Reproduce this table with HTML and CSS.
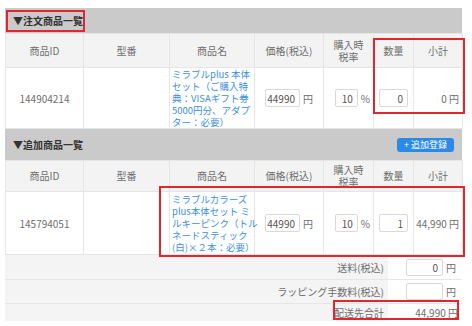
FILE: index.html
```html
<!DOCTYPE html>
<html lang="ja">
<head>
<meta charset="utf-8">
<link rel="stylesheet" href="styles.css">
</head>
<body>
<div class="page">
  <div class="tabstrip"><span class="tabtext">税込</span></div>

  <section class="sec">
    <div class="sec-head"><span class="sec-title">▼注文商品一覧</span></div>
    <table class="items">
      <colgroup>
        <col class="c-id"><col class="c-model"><col class="c-name"><col class="c-price"><col class="c-tax"><col class="c-qty"><col class="c-sub">
      </colgroup>
      <thead>
        <tr class="hrow hrow--a">
          <th>商品ID</th><th>型番</th><th>商品名</th><th>価格(税込)</th><th>購入時<br>税率</th><th>数量</th><th>小計</th>
        </tr>
      </thead>
      <tbody>
        <tr class="drow drow--a">
          <td class="t-id">144904214</td>
          <td></td>
          <td class="t-name"><a class="pname" href="#">ミラブルplus 本体<br>セット（ご購入特<br>典：VISAギフト券<br>5000円分、アダプ<br>ター：必要）</a></td>
          <td class="t-price"><input class="num num--price" value="44990"><span class="unit">円</span></td>
          <td class="t-tax"><input class="num num--tax" value="10"><span class="unit">%</span></td>
          <td class="t-qty"><input class="num num--qty" value="0"></td>
          <td class="t-sub">0 円</td>
        </tr>
      </tbody>
    </table>
  </section>

  <section class="sec">
    <div class="sec-head sec-head--tall"><span class="sec-title">▼追加商品一覧</span><button class="add-btn" type="button">+ 追加登録</button></div>
    <table class="items">
      <colgroup>
        <col class="c-id"><col class="c-model"><col class="c-name"><col class="c-price"><col class="c-tax"><col class="c-qty"><col class="c-sub">
      </colgroup>
      <thead>
        <tr class="hrow hrow--b">
          <th>商品ID</th><th>型番</th><th>商品名</th><th>価格(税込)</th><th>購入時<br>税率</th><th>数量</th><th>小計</th>
        </tr>
      </thead>
      <tbody>
        <tr class="drow drow--b">
          <td class="t-id">145794051</td>
          <td></td>
          <td class="t-name"><a class="pname" href="#">ミラブルカラーズ<br>plus本体セット ミ<br>ルキーピンク（トル<br>ネードスティック<br>(白)×２本：必要）</a></td>
          <td class="t-price"><input class="num num--price" value="44990"><span class="unit">円</span></td>
          <td class="t-tax"><input class="num num--tax" value="10"><span class="unit">%</span></td>
          <td class="t-qty"><input class="num num--qty" value="1"></td>
          <td class="t-sub">44,990 円</td>
        </tr>
      </tbody>
    </table>
    <div class="totals">
      <div class="tl tl--r1">送料(税込)</div>
      <div class="tv tv--r1"><input class="num num--fee" value="0"><span class="unit">円</span></div>
      <div class="tl tl--r2">ラッピング手数料(税込)</div>
      <div class="tv tv--r2"><input class="num num--fee" value=""><span class="unit">円</span></div>
      <div class="tl tl--r3">配送先合計</div>
      <div class="tv tv--r3">44,990 円</div>
    </div>
  </section>

  <div class="mark mark--1"></div>
  <div class="mark mark--2"></div>
  <div class="mark mark--3"></div>
  <div class="mark mark--4"></div>
</div>
</body>
</html>
```

FILE: styles.css
```css
* { box-sizing: border-box; }

html, body {
  margin: 0;
  padding: 0;
  background: #ffffff;
}

body {
  font-family: "Noto Sans CJK JP", "Noto Sans", sans-serif;
  font-size: 10px;
  color: #666666;
}

.page {
  position: relative;
  width: 472px;
  height: 326px;
  padding-left: 5px;
  overflow: hidden;
}

.tabstrip {
  height: 8px;
  width: 117px;
  overflow: hidden;
}

.tabtext {
  display: block;
  margin: -10px 0 0 78px;
  font-size: 9px;
  line-height: 12px;
  color: #bbbbbb;
}

.sec-head {
  width: 457px;
  height: 25px;
  background: #cacaca;
  display: flex;
  align-items: center;
  justify-content: space-between;
  padding: 0 8px;
}

.sec-head--tall {
  height: 31px;
}

.sec-title {
  font-weight: bold;
  font-size: 10px;
  color: #333333;
}

.add-btn {
  height: 14px;
  width: 57px;
  padding: 0;
  border: none;
  border-radius: 3px;
  background: #2b8ae6;
  color: #ffffff;
  font-family: "Noto Sans CJK JP", "Noto Sans", sans-serif;
  font-size: 9px;
  line-height: 14px;
}

.items {
  width: 457px;
  table-layout: fixed;
  border-collapse: collapse;
}

.c-id { width: 78px; }
.c-model { width: 86px; }
.c-name { width: 85px; }
.c-price { width: 69px; }
.c-tax { width: 50px; }
.c-qty { width: 40px; }
.c-sub { width: 49px; }

.items th,
.items td {
  border: 1px solid #e6e6e6;
  padding: 0;
  font-size: 10px;
  vertical-align: middle;
}

.items th {
  background: #f3f3f3;
  color: #6e6e6e;
  font-weight: normal;
  line-height: 12px;
  text-align: center;
}

.items td {
  background: #ffffff;
  color: #6e6e6e;
}

.hrow--a th { height: 34px; }
.hrow--b th { height: 31px; }
.drow--a td { height: 61px; }
.drow--b td { height: 63px; }

.t-id { text-align: center; }

.t-name {
  padding: 0 2px !important;
  white-space: nowrap;
}

.pname {
  display: block;
  color: #3d8fe0;
  text-decoration: none;
  font-size: 9.5px;
  line-height: 12px;
}

.t-price { text-align: center; white-space: nowrap; }
.t-tax { text-align: right; padding-right: 3px !important; white-space: nowrap; }
.t-qty { text-align: center; }
.t-sub { text-align: right; padding-right: 3px !important; white-space: nowrap; }

.num {
  display: inline-block;
  vertical-align: middle;
  height: 18px;
  border: 1px solid #d9d9d9;
  border-radius: 2px;
  background: #ffffff;
  padding: 0 4px 0 0;
  margin: 0;
  text-align: right;
  font-family: "Noto Sans CJK JP", "Noto Sans", sans-serif;
  font-size: 10px;
  color: #555555;
}

.num--price { width: 35px; }
.num--tax { width: 23px; }
.num--qty { width: 29px; }
.num--fee { width: 37px; height: 17px; }

.unit {
  display: inline-block;
  vertical-align: middle;
  margin-left: 3px;
  color: #6e6e6e;
}

.totals {
  width: 457px;
  display: grid;
  grid-template-columns: 1fr 74px;
  grid-template-rows: 25px 24px 17px;
}

.tl {
  background: #f4f4f4;
  padding-right: 4px;
  display: flex;
  align-items: center;
  justify-content: flex-end;
  color: #6e6e6e;
}

.tv {
  background: #ffffff;
  display: flex;
  align-items: center;
  justify-content: flex-end;
  padding-right: 6px;
  color: #6e6e6e;
}

.tl--r1, .tv--r1, .tl--r2, .tv--r2 {
  border-bottom: 1px solid #e6e6e6;
}

.tv--r3 { padding-right: 4px; }

.mark {
  position: absolute;
  border: 2px solid #e0262e;
  pointer-events: none;
}

.mark--1 { left: 6px; top: 10px; width: 79px; height: 22px; }
.mark--2 { left: 373px; top: 38px; width: 92px; height: 76px; }
.mark--3 { left: 159px; top: 186px; width: 306px; height: 71px; }
.mark--4 { left: 333px; top: 300px; width: 126px; height: 20px; }
```
